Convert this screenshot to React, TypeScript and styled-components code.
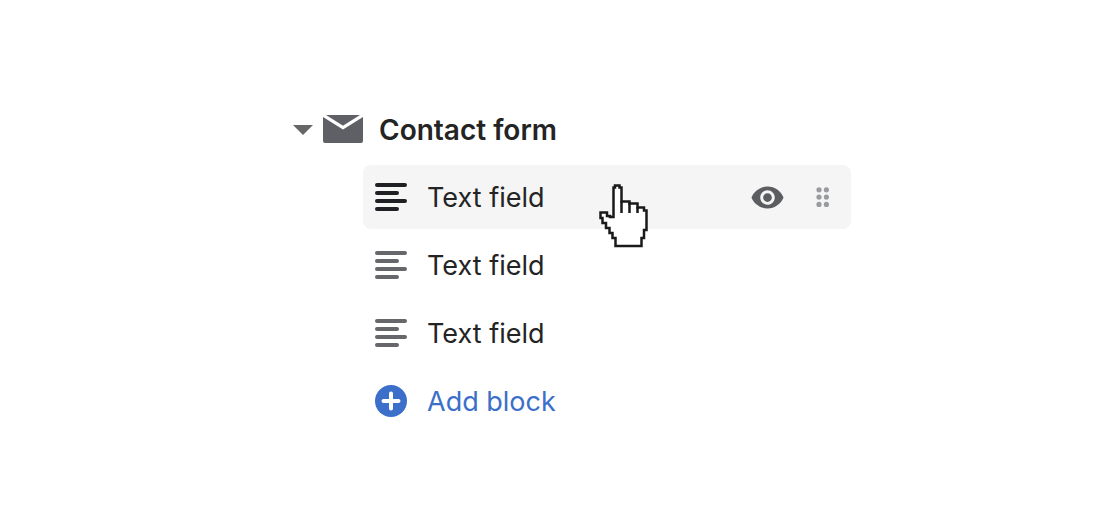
import React from 'react';
import styled, { createGlobalStyle } from 'styled-components';

const GlobalStyle = createGlobalStyle`
  html, body {
    margin: 0;
    background: #ffffff;
  }
  body {
    font-family: 'Inter', 'Liberation Sans', sans-serif;
    color: #242424;
  }
`;

const Page = styled.div`
  width: 1118px;
  height: 524px;
  padding: 110px 0 0 293px;
  box-sizing: border-box;
  overflow: hidden;
`;

const Header = styled.div`
  display: flex;
  align-items: center;
  height: 40px;
  margin-bottom: 15px;
`;

const Title = styled.span`
  margin-left: 16px;
  font-size: 28px;
  font-weight: 600;
  line-height: 38px;
`;

const Mail = styled.svg`
  margin: 0 0 2px 10px;
`;

const List = styled.div`
  display: flex;
  flex-direction: column;
  gap: 4px;
  width: 488px;
  margin-left: 70px;
`;

const Row = styled.div<{ $hover?: boolean }>`
  position: relative;
  display: flex;
  align-items: center;
  height: 64px;
  padding: 0 12px;
  border-radius: 8px;
  background: ${(props) => (props.$hover ? '#f5f5f5' : 'transparent')};
`;

const Label = styled.span<{ $accent?: boolean }>`
  margin-left: 20px;
  font-size: 27px;
  color: ${(props) => (props.$accent ? '#3b6fc9' : '#242424')};
`;

const Actions = styled.div`
  display: flex;
  align-items: center;
  gap: 31px;
  margin-left: auto;
  margin-right: 8px;
`;

const Cursor = styled.svg`
  position: absolute;
  left: 227px;
  top: 5px;
`;

function Caret() {
  return (
    <svg width="20" height="10" viewBox="0 0 20 10">
      <path d="M0 0h20L10 10z" fill="#666769" />
    </svg>
  );
}

function MailIcon() {
  return (
    <Mail width="40" height="28" viewBox="0 0 40 28">
      <path d="M0 0h40v26a2 2 0 0 1-2 2H2a2 2 0 0 1-2-2z" fill="#5f6066" />
      <path d="M0 0l20 12.5L40 0" fill="none" stroke="#fff" strokeWidth="3.2" />
    </Mail>
  );
}

function LinesIcon({ color }: { color: string }) {
  return (
    <svg width="32" height="28" viewBox="0 0 32 28">
      <g fill={color}>
        <rect x="0" y="0" width="32" height="4" rx="2" />
        <rect x="0" y="8" width="24" height="4" rx="2" />
        <rect x="0" y="16" width="32" height="4" rx="2" />
        <rect x="0" y="24" width="24" height="4" rx="2" />
      </g>
    </svg>
  );
}

function PlusIcon() {
  return (
    <svg width="32" height="32" viewBox="0 0 32 32">
      <circle cx="16" cy="16" r="16" fill="#3b6fc9" />
      <path d="M16 8.5v15M8.5 16h15" stroke="#fff" strokeWidth="4" strokeLinecap="round" />
    </svg>
  );
}

function EyeIcon() {
  return (
    <svg width="35" height="35" viewBox="0 0 24 24">
      <path
        fill="#5c5d60"
        d="M12 4.5C7 4.5 2.73 7.61 1 12c1.73 4.39 6 7.5 11 7.5s9.27-3.11 11-7.5c-1.73-4.39-6-7.5-11-7.5zM12 17c-2.76 0-5-2.24-5-5s2.24-5 5-5 5 2.24 5 5-2.24 5-5 5zm0-8c-1.66 0-3 1.34-3 3s1.34 3 3 3 3-1.34 3-3-1.34-3-3-3z"
      />
    </svg>
  );
}

function DragIcon() {
  const dots = [0, 1, 2].flatMap((r) => [0, 1].map((c) => [c, r]));
  return (
    <svg width="15" height="20" viewBox="0 0 15 20">
      {dots.map(([c, r]) => (
        <circle key={`${c}-${r}`} cx={3 + c * 7.4} cy={2.8 + r * 7.3} r="2.6" fill="#9a9b9e" />
      ))}
    </svg>
  );
}

function HandCursor() {
  return (
    <Cursor width="80" height="85" viewBox="0 0 80 85">
      <path
        d="M23.5 46V17.5H25V15.5H29.5V17.5H31.5V31.5H39.5V33.5H47.5V37.5H54V40.5H56.5V60H54V68H51.5V76H25.5V68H22.5V63H19.5V58H16V53H12.5V48H10.5V42.5H17V46H20V47H23.5Z"
        fill="#fff"
        stroke="#1a1a1a"
        strokeWidth="2.5"
      />
      <path d="M31.5 31V43M39.5 33V43M47.5 37V43" fill="none" stroke="#1a1a1a" strokeWidth="2.5" />
    </Cursor>
  );
}

export default function App() {
  return (
    <Page>
      <GlobalStyle />
      <Header>
        <Caret />
        <MailIcon />
        <Title>Contact form</Title>
      </Header>
      <List>
        <Row $hover>
          <LinesIcon color="#1f2023" />
          <Label>Text field</Label>
          <Actions>
            <EyeIcon />
            <DragIcon />
          </Actions>
          <HandCursor />
        </Row>
        <Row>
          <LinesIcon color="#66676a" />
          <Label>Text field</Label>
        </Row>
        <Row>
          <LinesIcon color="#66676a" />
          <Label>Text field</Label>
        </Row>
        <Row>
          <PlusIcon />
          <Label $accent>Add block</Label>
        </Row>
      </List>
    </Page>
  );
}
